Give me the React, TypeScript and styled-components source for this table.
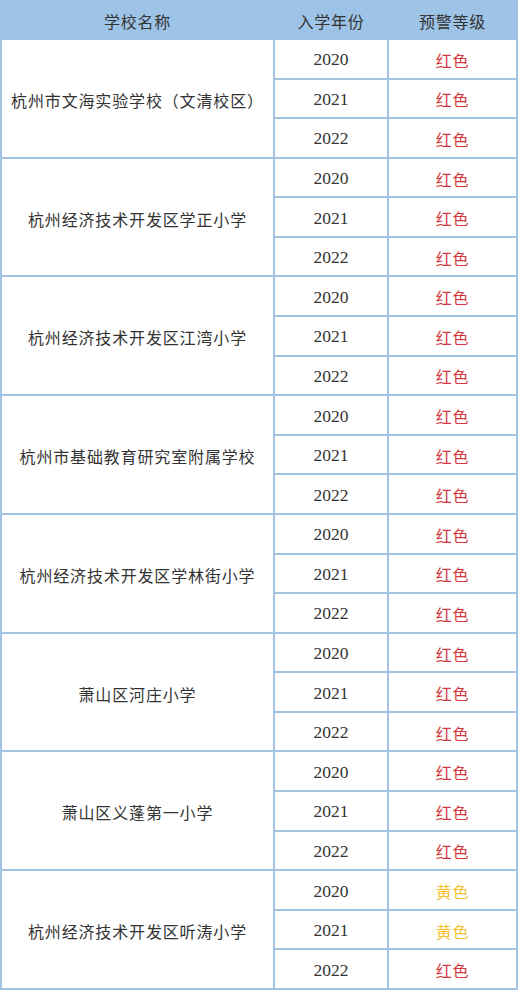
import React from "react";
import styled, { createGlobalStyle } from "styled-components";

const Global = createGlobalStyle`
  html, body { margin: 0; padding: 0; background: #ffffff; }
  body { font-family: "Noto Sans CJK SC", "Noto Sans", sans-serif; }
`;

const BORDER = "#a3c3e3";
const COLS = "271px 112px 127px";

const Table = styled.div`
  width: 518px;
  background: ${BORDER};
  padding: 0 2px 2px 2px;
  box-sizing: border-box;
`;

const Header = styled.div`
  display: grid;
  grid-template-columns: ${COLS};
  column-gap: 2px;
  height: 40px;
  margin: 0 -2px;
  padding: 0 2px;
  background: #9dc3e6;
`;

const HeadCell = styled.div`
  display: flex;
  align-items: center;
  justify-content: center;
  font-size: 16px;
  letter-spacing: 0.8px;
  color: #333333;
  padding-top: 1px;
`;

const Body = styled.div`
  display: grid;
  grid-template-columns: ${COLS};
  grid-template-rows: repeat(24, 1fr);
  gap: 2px;
  height: 948px;
`;

const NameCell = styled.div<{ $row: number }>`
  grid-column: 1;
  grid-row: ${(p) => p.$row} / span 3;
  background: #fff;
  display: flex;
  align-items: center;
  justify-content: center;
  font-size: 16px;
  letter-spacing: 0.85px;
  color: #333333;
  white-space: nowrap;
  padding-top: 3px;
`;

const YearCell = styled.div`
  background: #fff;
  display: flex;
  align-items: center;
  justify-content: center;
  font-family: "Liberation Serif", "Times New Roman", serif;
  font-size: 17.5px;
  color: #333333;
  padding-top: 2px;
`;

const LevelCell = styled.div<{ $yellow?: boolean }>`
  background: #fff;
  display: flex;
  align-items: center;
  justify-content: center;
  font-size: 16px;
  letter-spacing: 0.8px;
  color: ${(p) => (p.$yellow ? "#f1c232" : "#d23a3f")};
  padding-top: 2px;
`;

type School = { name: string; levels: string[] };

const schools: School[] = [
  { name: "杭州市文海实验学校（文清校区）", levels: ["红色", "红色", "红色"] },
  { name: "杭州经济技术开发区学正小学", levels: ["红色", "红色", "红色"] },
  { name: "杭州经济技术开发区江湾小学", levels: ["红色", "红色", "红色"] },
  { name: "杭州市基础教育研究室附属学校", levels: ["红色", "红色", "红色"] },
  { name: "杭州经济技术开发区学林街小学", levels: ["红色", "红色", "红色"] },
  { name: "萧山区河庄小学", levels: ["红色", "红色", "红色"] },
  { name: "萧山区义蓬第一小学", levels: ["红色", "红色", "红色"] },
  { name: "杭州经济技术开发区听涛小学", levels: ["黄色", "黄色", "红色"] },
];

const years = ["2020", "2021", "2022"];

export default function App() {
  return (
    <>
      <Global />
      <Table>
        <Header>
          <HeadCell>学校名称</HeadCell>
          <HeadCell>入学年份</HeadCell>
          <HeadCell>预警等级</HeadCell>
        </Header>
        <Body>
          {schools.map((s, i) => (
            <React.Fragment key={s.name}>
              <NameCell $row={i * 3 + 1}>{s.name}</NameCell>
              {years.map((y, j) => (
                <React.Fragment key={y}>
                  <YearCell style={{ gridRow: i * 3 + j + 1 }}>{y}</YearCell>
                  <LevelCell
                    $yellow={s.levels[j] === "黄色"}
                    style={{ gridRow: i * 3 + j + 1 }}
                  >
                    {s.levels[j]}
                  </LevelCell>
                </React.Fragment>
              ))}
            </React.Fragment>
          ))}
        </Body>
      </Table>
    </>
  );
}
